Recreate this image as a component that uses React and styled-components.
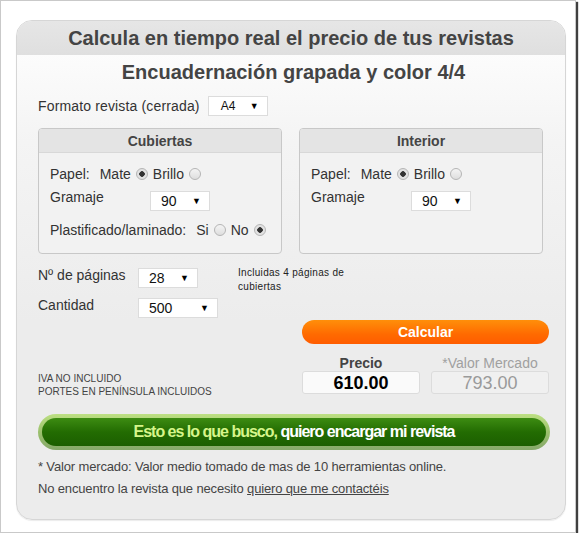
import React from 'react';
import styled, { createGlobalStyle } from 'styled-components';

const GlobalStyle = createGlobalStyle`
  body {
    margin: 0;
    background: #ffffff;
    font-family: "Liberation Sans", Arial, sans-serif;
  }
`;

export default function App() {
  return (
    <>
      <GlobalStyle />
      <Frame>
        <Card>
          <Header>Calcula en tiempo real el precio de tus revistas</Header>
          <Body>
            <Subtitle>Encuadernación grapada y color 4/4</Subtitle>
            <FormatRow>
              <Label>Formato revista (cerrada)</Label>
              <Select width={60} small>A4</Select>
            </FormatRow>

            <Panels>
              <Panel>
                <PanelTitle>Cubiertas</PanelTitle>
                <PanelBody>
                  <PaperRow>
                    <span>Papel:</span>
                    <Options>
                      Mate <Radio checked /> Brillo <Radio />
                    </Options>
                  </PaperRow>
                  <GramRow>
                    <GramLabel>Gramaje</GramLabel>
                    <Select width={60}>90</Select>
                  </GramRow>
                  <PaperRow>
                    <span>Plastificado/laminado:</span>
                    <Options>
                      Si <Radio /> No <Radio checked />
                    </Options>
                  </PaperRow>
                </PanelBody>
              </Panel>
              <Panel>
                <PanelTitle>Interior</PanelTitle>
                <PanelBody>
                  <PaperRow>
                    <span>Papel:</span>
                    <Options>
                      Mate <Radio checked /> Brillo <Radio />
                    </Options>
                  </PaperRow>
                  <GramRow>
                    <GramLabel>Gramaje</GramLabel>
                    <Select width={60}>90</Select>
                  </GramRow>
                </PanelBody>
              </Panel>
            </Panels>

            <Bottom>
              <LeftCol>
                <QtyRow>
                  <QtyLabel>Nº de páginas</QtyLabel>
                  <Select width={60}>28</Select>
                  <Note>Incluidas 4 páginas de<br />cubiertas</Note>
                </QtyRow>
                <QtyRow>
                  <QtyLabel>Cantidad</QtyLabel>
                  <Select width={80}>500</Select>
                </QtyRow>
                <Tax>
                  IVA NO INCLUIDO<br />PORTES EN PENÍNSULA INCLUIDOS
                </Tax>
              </LeftCol>
              <RightCol>
                <CalcButton>Calcular</CalcButton>
                <Prices>
                  <PriceBox>
                    <PriceLabel>Precio</PriceLabel>
                    <PriceValue>610.00</PriceValue>
                  </PriceBox>
                  <PriceBox>
                    <PriceLabel muted>*Valor Mercado</PriceLabel>
                    <PriceValue muted>793.00</PriceValue>
                  </PriceBox>
                </Prices>
              </RightCol>
            </Bottom>

            <OrderButton>
              <OrderInner>
                <Lime>Esto es lo que busco,</Lime>&nbsp;quiero encargar mi revista
              </OrderInner>
            </OrderButton>

            <Footnote>
              * Valor mercado: Valor medio tomado de mas de 10 herramientas online.<br />
              No encuentro la revista que necesito <Link href="#">quiero que me contactéis</Link>
            </Footnote>
          </Body>
        </Card>
      </Frame>
    </>
  );
}

function Select({ children, width, small }) {
  return (
    <SelectBox style={{ width }} $small={small}>
      <span>{children}</span>
      <Arrow>▼</Arrow>
    </SelectBox>
  );
}

const Frame = styled.div`
  width: 576px;
  height: 533px;
  box-sizing: border-box;
  border: 1px solid #c9c9c9;
  background: #ffffff;
  box-shadow: 2px 2px 1px rgba(0, 0, 0, 0.75);
  padding: 19px 0 0 15px;
`;

const Card = styled.div`
  width: 550px;
  height: 500px;
  box-sizing: border-box;
  border: 1px solid #d6d6d6;
  border-radius: 16px;
  overflow: hidden;
  background: linear-gradient(#ffffff 0px, #f4f4f4 120px, #ececec 300px);
  box-shadow: 0 1px 1px rgba(0, 0, 0, 0.08);
`;

const Header = styled.div`
  height: 34px;
  background: linear-gradient(#e6e6e6, #dfdfdf);
  color: #444;
  font-size: 20px;
  font-weight: bold;
  text-align: center;
  line-height: 34px;
`;

const Body = styled.div`
  padding: 0 16px 0 21px;
  color: #333;
`;

const Subtitle = styled.div`
  margin-top: 6px;
  text-align: center;
  font-size: 20px;
  font-weight: bold;
  color: #444;
  line-height: 22px;
`;

const FormatRow = styled.div`
  display: flex;
  align-items: center;
  gap: 8px;
  margin-top: 13px;
  height: 20px;
`;

const Label = styled.span`
  font-size: 14px;
  color: #333;
  letter-spacing: 0.15px;
`;

const SelectBox = styled.div`
  flex: none;
  box-sizing: border-box;
  height: 20px;
  background: #fff;
  border: 1px solid #dcdcdc;
  display: flex;
  align-items: center;
  justify-content: space-between;
  padding: 0 8px 0 ${(p) => (p.$small ? '12px' : '10px')};
  font-size: ${(p) => (p.$small ? '12px' : '14px')};
  color: #111;
`;

const Arrow = styled.span`
  font-size: 9px;
  color: #000;
`;

const Panels = styled.div`
  display: flex;
  gap: 17px;
  margin-top: 12px;
`;

const Panel = styled.div`
  width: 244px;
  height: 126px;
  box-sizing: border-box;
  border: 1px solid #c8c8c8;
  border-radius: 4px;
  background: #f2f2f2;
  overflow: hidden;
`;

const PanelTitle = styled.div`
  height: 23px;
  line-height: 25px;
  background: #e4e4e4;
  border-bottom: 1px solid #d8d8d8;
  text-align: center;
  font-size: 14px;
  font-weight: bold;
  color: #444;
`;

const PanelBody = styled.div`
  padding: 12px 11px 0;
  font-size: 14px;
  color: #333;
`;

const PaperRow = styled.div`
  display: flex;
  align-items: center;
  gap: 10px;
  height: 18px;
  margin-bottom: 8px;
`;

const Options = styled.span`
  display: flex;
  align-items: center;
  gap: 5px;
`;

const Radio = styled.span`
  display: inline-block;
  width: 12px;
  height: 12px;
  box-sizing: border-box;
  border-radius: 50%;
  border: 1px solid #b5b5b5;
  background: ${(p) =>
    p.checked
      ? 'radial-gradient(circle, #333 0 2.5px, #e2e2e2 3px)'
      : 'linear-gradient(#f4f4f4, #dedede)'};
`;

const GramRow = styled.div`
  display: flex;
  align-items: flex-start;
  height: 26px;
  margin-top: 3px;
  margin-bottom: 4px;
`;

const GramLabel = styled.span`
  width: 100px;
  flex: none;
  line-height: 16px;
  margin-top: -2px;
`;

const Bottom = styled.div`
  display: flex;
  margin-top: 14px;
  height: 132px;
`;

const LeftCol = styled.div`
  width: 264px;
  display: flex;
  flex-direction: column;
`;

const QtyRow = styled.div`
  display: flex;
  align-items: flex-start;
  height: 30px;
`;

const QtyLabel = styled.span`
  width: 100px;
  flex: none;
  white-space: nowrap;
  font-size: 14px;
  line-height: 16px;
  margin-top: -1px;
`;

const Note = styled.span`
  margin-left: 40px;
  margin-top: -2px;
  white-space: nowrap;
  font-size: 10px;
  letter-spacing: 0.3px;
  line-height: 14px;
  color: #222;
`;

const Tax = styled.div`
  margin-top: auto;
  margin-bottom: 2px;
  font-size: 10px;
  line-height: 13px;
  color: #444;
`;

const RightCol = styled.div`
  width: 247px;
  padding-top: 52px;
`;

const CalcButton = styled.div`
  height: 24px;
  border-radius: 12px;
  background: linear-gradient(#ff8f0a, #ff6a00 60%, #ff5c00);
  color: #fff;
  font-weight: bold;
  font-size: 14px;
  line-height: 24px;
  text-align: center;
`;

const Prices = styled.div`
  display: flex;
  justify-content: space-between;
  margin-top: 11px;
`;

const PriceBox = styled.div`
  width: 118px;
  display: flex;
  flex-direction: column;
  align-items: stretch;
`;

const PriceLabel = styled.div`
  text-align: center;
  font-size: 14px;
  line-height: 16px;
  font-weight: ${(p) => (p.muted ? 'normal' : 'bold')};
  color: ${(p) => (p.muted ? '#a0a0a0' : '#444')};
`;

const PriceValue = styled.div`
  height: 23px;
  box-sizing: border-box;
  border: 1px solid #dcdcdc;
  border-radius: 3px;
  background: ${(p) => (p.muted ? '#f0f0f0' : '#fafafa')};
  text-align: center;
  font-size: 18px;
  line-height: 22px;
  font-weight: ${(p) => (p.muted ? 'normal' : 'bold')};
  color: ${(p) => (p.muted ? '#9a9a9a' : '#000')};
`;

const OrderButton = styled.div`
  margin-top: 14px;
  width: 512px;
  height: 36px;
  box-sizing: border-box;
  border-radius: 18px;
  padding: 4px;
  background: linear-gradient(#bde083, #9bc06d 50%, #86a86a);
`;

const OrderInner = styled.div`
  height: 28px;
  border-radius: 14px;
  background: linear-gradient(#3d8c12, #236c02 50%, #1c5e00);
  color: #fff;
  font-weight: bold;
  font-size: 16px;
  letter-spacing: -1px;
  line-height: 28px;
  text-align: center;
`;

const Lime = styled.span`
  color: #d6f58a;
`;

const Footnote = styled.div`
  margin-top: 6px;
  font-size: 13px;
  letter-spacing: -0.15px;
  line-height: 22px;
  color: #444;
`;

const Link = styled.a`
  color: #444;
  text-decoration: underline;
`;
